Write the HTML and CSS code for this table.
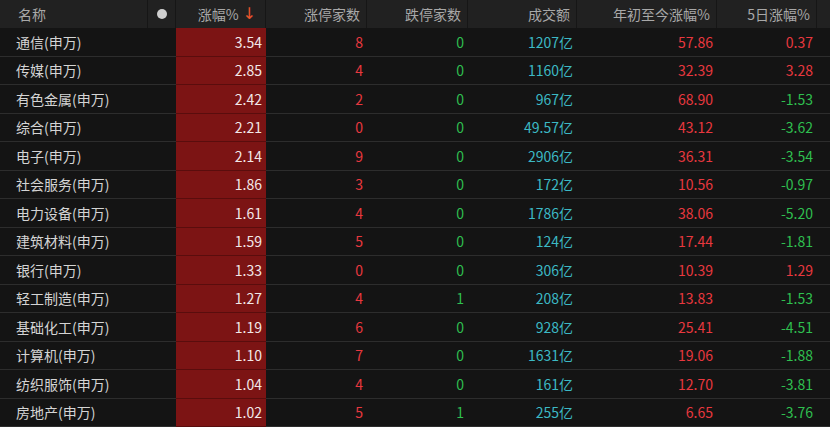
FILE: index.html
```html
<!DOCTYPE html>
<html lang="zh">
<head>
<meta charset="utf-8">
<link rel="stylesheet" href="styles.css">
</head>
<body>
<div class="board">
  <div class="row head">
    <div class="c name">名称</div>
    <div class="c dotc"><span class="dot"></span></div>
    <div class="c pct">涨幅% <span class="arrow">↓</span></div>
    <div class="c num">涨停家数</div>
    <div class="c num">跌停家数</div>
    <div class="c num">成交额</div>
    <div class="c num">年初至今涨幅%</div>
    <div class="c num">5日涨幅%</div>
    <div class="c tail"></div>
  </div>
  <div id="rows"></div>
</div>
<script src="app.js"></script>
</body>
</html>
```

FILE: app.js
```js
const data = [
  ["通信(申万)","3.54","8","0","1207亿","57.86","0.37"],
  ["传媒(申万)","2.85","4","0","1160亿","32.39","3.28"],
  ["有色金属(申万)","2.42","2","0","967亿","68.90","-1.53"],
  ["综合(申万)","2.21","0","0","49.57亿","43.12","-3.62"],
  ["电子(申万)","2.14","9","0","2906亿","36.31","-3.54"],
  ["社会服务(申万)","1.86","3","0","172亿","10.56","-0.97"],
  ["电力设备(申万)","1.61","4","0","1786亿","38.06","-5.20"],
  ["建筑材料(申万)","1.59","5","0","124亿","17.44","-1.81"],
  ["银行(申万)","1.33","0","0","306亿","10.39","1.29"],
  ["轻工制造(申万)","1.27","4","1","208亿","13.83","-1.53"],
  ["基础化工(申万)","1.19","6","0","928亿","25.41","-4.51"],
  ["计算机(申万)","1.10","7","0","1631亿","19.06","-1.88"],
  ["纺织服饰(申万)","1.04","4","0","161亿","12.70","-3.81"],
  ["房地产(申万)","1.02","5","1","255亿","6.65","-3.76"]
];
const rows = document.getElementById("rows");
rows.innerHTML = data.map(d => {
  const five = d[6].startsWith("-") ? "green" : "red";
  return `<div class="row">
    <div class="c name">${d[0]}</div>
    <div class="c dotc"></div>
    <div class="c pct val">${d[1]}</div>
    <div class="c num red">${d[2]}</div>
    <div class="c num green">${d[3]}</div>
    <div class="c num cyan">${d[4]}</div>
    <div class="c num red">${d[5]}</div>
    <div class="c num ${five}">${d[6]}</div>
    <div class="c tail"></div>
  </div>`;
}).join("");
```

FILE: styles.css
```css
html, body {
  margin: 0;
  padding: 0;
  background: #141414;
}
body {
  font-family: "Noto Sans CJK SC", "Noto Sans", sans-serif;
  font-size: 14px;
  color: #d4d4d4;
  width: 830px;
  height: 427px;
  overflow: hidden;
}
.board {
  display: flex;
  flex-direction: column;
}
.row {
  display: grid;
  grid-template-columns: 148px 28px 90px 101px 101px 109px 140px 100px 13px;
  height: 28.5px;
  box-sizing: border-box;
  border-bottom: 1px solid #2d2d2d;
}
.row.head {
  height: 28px;
  background: #212121;
  border-bottom: none;
  color: #a8a8a8;
}
.c {
  display: flex;
  align-items: center;
  padding-right: 4px;
  white-space: nowrap;
  line-height: 1;
}
.head .c {
  border-right: 1px solid #161616;
  padding-right: 6px;
}
.head .tail { border-right: none; }
.name {
  padding-left: 16px;
}
.head .name { padding-left: 18px; }
.dotc, .head .dotc {
  justify-content: center;
  padding: 0;
}
.dot {
  width: 10px;
  height: 10px;
  border-radius: 50%;
  background: #cfcfcf;
}
.pct, .num {
  justify-content: flex-end;
}
.head .pct { padding-right: 9px; }
.arrow {
  color: #e8542c;
  margin-left: 4px;
  font-family: "DejaVu Sans", sans-serif;
  font-size: 16px;
}
.val {
  background: #7c1414;
  color: #f2e8e8;
  margin-bottom: -1px;
  border-bottom: 1px solid #5a0d0d;
}
.red { color: #e8383f; }
.green { color: #2fbf4f; }
.cyan { color: #3cb9c4; }
```
